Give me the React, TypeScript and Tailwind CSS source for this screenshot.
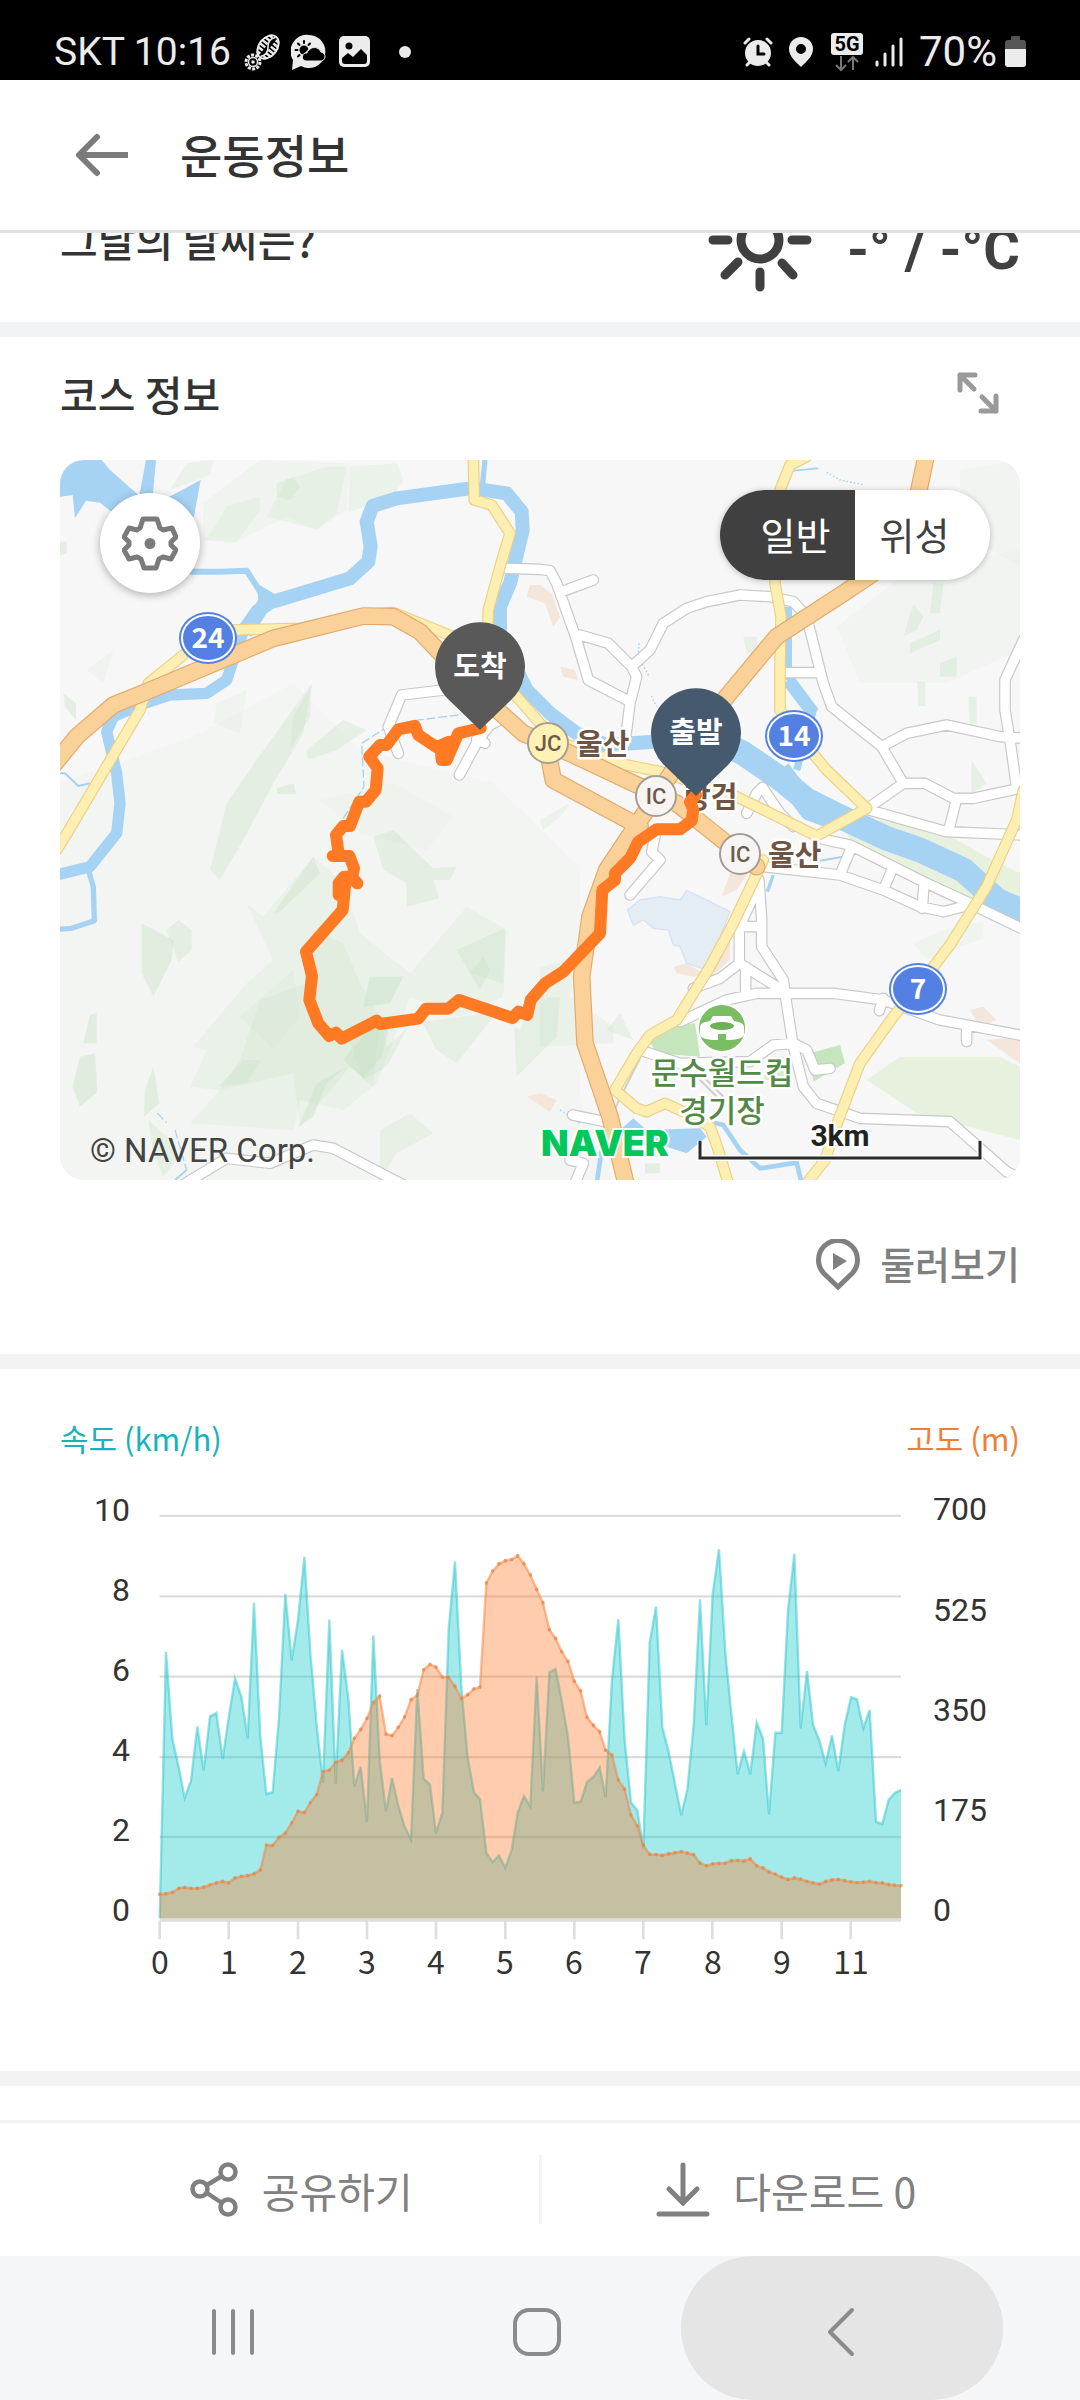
import React from "react";

const SPEED = [
  1354, 658, 885, 960, 1040, 995, 853, 968, 827, 818, 938, 830, 728, 775, 884, 530, 880, 1030, 1025, 830, 507, 680, 575,
  410, 660, 850, 1000, 574, 1003, 653, 780, 1010, 958, 1102, 615, 940, 1075, 988, 1060, 1115, 1148, 755, 990, 1005,
  1132, 1078, 600, 422, 750, 935, 1025, 1043, 1183, 1208, 1190, 1223, 1175, 1078, 1035, 1062, 722, 1023, 712, 703, 785,
  880, 1052, 1050, 998, 985, 960, 1038, 730, 573, 890, 1052, 1072, 1172, 635, 540, 855, 920, 1003, 1085, 1018, 850, 521,
  850, 508, 390, 660, 820, 978, 917, 978, 843, 885, 1083, 870, 870, 550, 402, 858, 708, 848, 890, 950, 877, 970, 850,
  777, 782, 858, 810, 1102, 1108, 1045, 1027, 1019,
];

const ALTITUDE = [
  1291, 1290, 1287, 1276, 1274, 1276, 1276, 1273, 1267, 1262, 1258, 1262, 1249, 1245, 1243, 1238, 1228, 1163, 1164,
  1143, 1132, 1105, 1075, 1078, 1052, 1031, 971, 967, 947, 941, 922, 884, 861, 832, 791, 774, 873, 877, 855, 828, 783,
  771, 705, 691, 698, 724, 725, 748, 780, 770, 755, 750, 478, 447, 428, 420, 417, 407, 428, 457, 495, 530, 600, 623,
  657, 683, 735, 760, 829, 850, 867, 915, 928, 993, 1017, 1084, 1113, 1163, 1187, 1188, 1190, 1186, 1183, 1180, 1184,
  1188, 1210, 1217, 1212, 1211, 1210, 1204, 1203, 1205, 1199, 1217, 1223, 1233, 1239, 1247, 1253, 1249, 1252, 1258,
  1262, 1265, 1258, 1254, 1253, 1256, 1259, 1261, 1260, 1258, 1261, 1262, 1266, 1268, 1269,
];

const STEP = 18.85;
const px = (i: number) => Math.round(299 + i * STEP);
const line = (data: number[]) => data.map((y, i) => `${px(i)},${y}`).join(" ");
const area = (data: number[]) => `299,1354 ${line(data)} ${px(data.length - 1)},1354`;

const LEFT_LABELS: [string, number][] = [
  ["10", 121],
  ["8", 201],
  ["6", 281],
  ["4", 361],
  ["2", 441],
  ["0", 521],
];
const RIGHT_LABELS: [string, number][] = [
  ["700", 120],
  ["525", 221],
  ["350", 321],
  ["175", 421],
  ["0", 521],
];
const X_LABELS = ["0", "1", "2", "3", "4", "5", "6", "7", "8", "9", "11"];

function Chart() {
  return (
    <svg viewBox="0 80 960 500" className="block w-full" role="img" aria-label="속도와 고도 그래프">
      <g transform="scale(0.33333 0.38268)">
        {[303, 513, 723, 933, 1142].map((y) => (
          <path key={y} d={`M299 ${y}H2523`} stroke="#dcdcdc" strokeWidth="6" />
        ))}
        <path d="M299 1359H2523" stroke="#dedede" strokeWidth="9" />
        {X_LABELS.map((l, i) => (
          <path key={l} d={`M${299 + Math.round(i * 207.3)} 1360V1409`} stroke="#dedede" strokeWidth="8" />
        ))}
        <polygon points={area(SPEED)} fill="#29ced0" fillOpacity=".43" />
        <polyline points={line(SPEED)} fill="none" stroke="#29c6ce" strokeOpacity=".5" strokeWidth="7" />
        <polygon points={area(ALTITUDE)} fill="#ff7824" fillOpacity=".37" />
        <polyline points={line(ALTITUDE)} fill="none" stroke="#f5803c" strokeOpacity=".5" strokeWidth="7" />
        {ALTITUDE.map((y, i) => (
          <circle key={i} cx={px(i)} cy={y} r="5" fill="#e88544" fillOpacity=".75" />
        ))}
      </g>
      <g className="text-[32px]" fill="#333" fontFamily="Roboto, sans-serif">
        {LEFT_LABELS.map(([t, y]) => (
          <text key={t} x="70" y={y} textAnchor="end">{t}</text>
        ))}
        {RIGHT_LABELS.map(([t, y]) => (
          <text key={t} x="873" y={y}>{t}</text>
        ))}
      </g>
      <g className="text-[32px]" fill="#333" fontFamily="'Noto Sans CJK KR', sans-serif">
        {X_LABELS.map((t, i) => (
          <text key={t} x={Math.round(99.7 + i * 69.1)} y="574" textAnchor="middle">{t}</text>
        ))}
      </g>
    </svg>
  );
}

const WHITE_ROADS = [
  "M1340 355L1440 358L1470 362L1490 400L1550 570L1585 690L1710 755",
  "M1505 425L1600 390",
  "M1560 555L1645 580L1715 650L1730 680L1710 760L1695 880",
  "M1715 650L1770 600L1810 520L1880 475L1940 455L2040 435L2130 440L2200 455L2240 500L2290 700L2315 770L2465 890L2530 1000L2430 1070",
  "M2170 668H2280",
  "M2465 890L2540 850L2660 825L2820 860L2900 865",
  "M2890 570L2835 690L2835 780L2850 870L2868 1000",
  "M2530 1000L2595 1000L2680 1045L2740 1045L2890 1013",
  "M2690 1045L2668 1135",
  "M2420 1078L2660 1145L2890 1155",
  "M2060 1090L2090 1030L2107 1012L2160 1090L2200 1130",
  "M1150 720L1025 735L985 830L1015 910",
  "M1330 805L1290 825L1255 870L1198 975",
  "M1250 868L1275 880",
  "M2290 1168L2370 1185L2500 1250L2600 1300L2730 1360L2770 1380L2890 1438",
  "M2110 1250L2340 1275L2470 1320L2580 1370L2650 1385L2730 1365",
  "M2375 1190L2340 1275",
  "M2500 1250L2470 1320",
  "M2592 1300L2587 1375",
  "M2097 1290L2105 1410L2105 1490L2170 1590L2175 1630",
  "M2080 1340L2038 1430L2038 1540L1980 1585L1900 1615",
  "M2038 1540L2175 1625",
  "M2057 1550V1630",
  "M2040 1430H2100",
  "M1860 1715L2000 1650L2090 1630L2320 1630L2470 1650L2640 1710L2890 1757",
  "M2470 1645L2458 1682",
  "M2720 1730V1775",
  "M2175 1630L2200 1790L2230 1910L2270 1960L2400 2005L2670 2015L2840 2165L2890 2190",
  "M1740 1800L1860 1840L2070 1835L2140 1785L2200 1780L2240 1800L2265 1860L2310 1855",
  "M1538 1995L1660 2020",
  "M1530 2130L1570 2140L1545 2200",
  "M1785 1160L1775 1205L1800 1230L1710 1335",
  "M360 2210L500 2125L630 2140L760 2085L820 2095L1030 2205",
];

const YELLOW_ROADS = [
  "M1240 20L1243 150L1295 165L1350 250L1320 350L1285 480L1283 560",
  "M520 540L720 535L900 495L1000 488L1180 560L1370 740L1440 820L1510 880L1700 945L1800 965L2030 1040L2270 1158L2420 1075L2300 960L2250 900L2160 780L2160 650L2163 500L2145 400L2145 200L2160 120L2190 45L2240 20",
  "M370 615L265 700L240 780L15 1160L-10 1200",
  "M2110 1230L2020 1420L1950 1550L1850 1710L1770 1755L1730 1810L1665 1920L1730 1975L1760 1985L1815 1960L1880 1990L1950 2030L1975 2100L2008 2210",
  "M2890 1020L2870 1110L2780 1310L2670 1485L2590 1590L2500 1700L2400 1840L2335 2010L2295 2130L2240 2200",
];

const ORANGE_ROADS = [
  "M2600 10L2560 200L2500 330L2350 430L2150 560L2000 740L1880 900L1780 1050L1720 1140L1640 1260L1590 1400L1565 1580L1575 1780L1650 2000L1700 2210",
  "M1470 940L1480 990L1740 1130",
  "M-15 940L50 860L160 765L260 725L640 565L910 498L1000 500L1080 545L1180 650L1290 760L1390 850L1530 910L1720 1000L1850 1060L2000 1180L2090 1250",
];

const RIVERS: [string, number][] = [
  ["M1275 30L1266 120", 16],
  ["M1230 115L1010 145L938 168L920 215L932 290L925 335L870 385L640 455", 42],
  ["M640 455L590 480L555 530L520 630L500 690L440 730L330 735L240 765L160 800L140 845L170 970L180 1060L170 1150L90 1250L-10 1275", 34],
  ["M390 365H480L560 362L610 440", 18],
  ["M85 1260L100 1310L103 1412L35 1435L-10 1438", 16],
  ["M1240 115L1340 130L1385 185L1388 240L1350 400L1320 470L1320 560L1400 720L1470 790L1550 850L1640 885L1780 875L1950 860", 42],
  ["M1950 860L2050 910L2160 985L2240 1050L2340 1100L2480 1165L2580 1200L2710 1260L2810 1350L2900 1390", 74],
  ["M2160 960L2250 1080L2330 1110", 64],
  ["M2185 470V680L2260 780L2210 960", 22],
  ["M2185 690L2260 790", 40],
  ["M2140 1275L2122 1325", 10],
  ["M2280 1232L2350 1220", 6],
  ["M1950 2015L1990 2025L2040 2100L2100 2155L2210 2138L2225 2200", 14],
  ["M1610 2200L1625 2100", 14],
  ["M2200 62L2275 55", 5],
  ["M345 2190L380 2160", 6],
  ["M0 970H15L55 1008L90 1000", 6],
];

const HILLS: [string, number][] = [
  ["M0 1000L400 860L700 700L900 900L1300 1000L1560 1250L1560 1950L1660 2190H0V1500Z", 0.08],
  ["M430 160L600 30L870 40L860 180L770 240L680 200L520 280L430 270Z", 0.15],
  ["M870 50L1010 40L1030 90L990 150L865 185Z", 0.25],
  ["M680 90L800 50L860 50L830 190L770 238L620 200Z", 0.25],
  ["M650 100L700 80L720 110L690 150L650 140Z", 0.3],
  ["M380 40L460 30L450 75L330 120Z", 0.25],
  ["M0 275H20V310L0 318Z", 0.4],
  ["M10 730L48 760V810L15 770Z", 0.4],
  ["M500 170L600 140L600 180L530 275L440 270Z", 0.25],
  ["M590 930L755 700L730 850L640 1000L550 1170L480 1290L450 1260L500 1060Z", 0.35],
  ["M740 900L850 810L920 840L830 900L745 930Z", 0.35],
  ["M700 800L755 705L750 800L690 900Z", 0.3],
  ["M470 760L560 720L540 850L460 820Z", 0.15],
  ["M80 660L160 600L130 700Z", 0.15],
  ["M650 1015L700 1000L708 1032H652Z", 0.4],
  ["M940 1160L1000 1140L1120 1255L1190 1250L1170 1290L1120 1290L1138 1345L1040 1370L1040 1300L970 1260Z", 0.35],
  ["M640 1390L760 1220L780 1270L660 1385Z", 0.35],
  ["M780 1050L1000 1000L1180 1100L1100 1200L900 1150Z", 0.1],
  ["M560 1360L610 1400L760 1220L850 1300L900 1450L1050 1570L1220 1370L1340 1440L1330 1640L1200 1700L1050 1640L950 1900L850 1980L720 1950L700 2040L390 2020L480 1920L390 1910L440 1800L400 1790L560 1600L640 1530Z", 0.22],
  ["M600 1650L740 1600L760 1440L850 1480L900 1600L960 1700L940 1910L870 1850L720 2030L700 1870L480 1920L540 1830Z", 0.2],
  ["M540 1700L700 1560L720 1700L640 1800Z", 0.12],
  ["M870 1780L960 1700L980 1790L1080 1700L1130 1800L1190 1840L1300 1700L1380 1740L1420 1650L1500 1640L1490 1760L1370 1880L1360 1680L1050 1720L980 1850L910 1890Z", 0.3],
  ["M850 1830L950 1710L985 1740L965 1820L910 1885Z", 0.5],
  ["M720 2020L770 1900L860 1850L800 1900L760 2000L710 2035Z", 0.4],
  ["M245 1420L340 1470L335 1530L280 1640L245 1570Z", 0.4],
  ["M320 1440L355 1410L395 1440L395 1500L355 1535Z", 0.35],
  ["M90 1695L110 1690V1780H70Z", 0.4],
  ["M60 1820L105 1810L112 1925L60 1970L38 1910Z", 0.45],
  ["M280 1850L298 1960L252 2000L255 1920Z", 0.4],
  ["M475 1910L550 1830L605 1830L560 1900Z", 0.35],
  ["M1190 1500L1335 1435L1330 1600L1230 1570Z", 0.3],
  ["M1230 1570L1270 1520L1290 1560L1260 1620Z", 0.3],
  ["M930 1580L1030 1580L990 1660L910 1670Z", 0.45],
  ["M960 2040L1050 1990L1120 2050L1010 2110L960 2190Z", 0.25],
  ["M265 2010L320 2060L350 2130L310 2180L280 2110Z", 0.3],
  ["M1440 1550L1540 1530L1530 1640L1660 1730L1660 1780L1440 1790Z", 0.22],
  ["M1680 1690L1720 1770L1640 1740Z", 0.3],
  ["M2330 530L2550 360L2880 300V600L2660 700L2400 700Z", 0.09],
  ["M2560 460L2590 500L2570 540L2530 560Z", 0.35],
  ["M2620 400H2650L2640 490H2610Z", 0.35],
  ["M2550 580L2640 540V570L2550 610Z", 0.35],
  ["M2640 640L2690 620V680L2640 680Z", 0.35],
  ["M2572 695H2596V768H2575Z", 0.35],
  ["M2725 740H2750V820L2730 825Z", 0.35],
  ["M2735 930L2780 1000L2735 1030Z", 0.35],
  ["M2050 560H2090V610H2060Z", 0.3],
  ["M2700 60L2880 30V350L2700 250Z", 0.09],
  ["M2560 1480L2650 1440L2770 1415L2770 1465L2700 1490L2600 1530Z", 0.15],
  ["M1440 1110L1530 1060L1500 1100L1450 1140Z", 0.25],
  ["M1755 2140H1800V2170H1755Z", 0.4],
];

const PEACH = [
  "M1440 405L1475 430L1500 500L1480 530L1455 460L1400 440L1410 405Z",
  "M1500 650L1545 660L1555 690L1510 680Z",
  "M2010 1270L2070 1260L2030 1320L1985 1340Z",
  "M1840 1550L1880 1540L1930 1570L1900 1580L1850 1570Z",
  "M2010 1440V1530L1960 1575L1940 1575Z",
  "M2730 1680L2770 1670L2810 1710L2760 1730Z",
  "M2780 1770L2880 1760V1840Z",
  "M1400 1940L1440 1930L1490 1950L1470 1985Z",
];

const TRACK =
  "M1262 834L1195 850L1160 930H1145L1142 895L1165 876L1130 892L1075 855L1065 828L1015 838L980 885H960L928 920L953 955L947 1020L918 1055H898L870 1128L850 1128L828 1155L837 1218H818L868 1218L882 1255L876 1285L892 1300L876 1282L852 1280L836 1300V1335L855 1310L848 1380L738 1505L756 1578L748 1650L775 1720L808 1758L828 1748L845 1766L950 1712L960 1722L1075 1706L1098 1676H1165L1197 1650L1358 1704L1375 1685L1402 1695L1412 1650L1455 1600L1510 1565L1620 1450L1627 1320L1665 1290V1270L1710 1225L1735 1175L1790 1138H1860L1895 1112L1900 1080L1890 1055L1908 1035";

function Roads({ paths, edge, fill, width }: { paths: string[]; edge: string; fill: string; width: number }) {
  return (
    <g fill="none" strokeLinecap="round" strokeLinejoin="round">
      <path d={paths.join("")} stroke={edge} strokeWidth={width + 7} />
      <path d={paths.join("")} stroke={fill} strokeWidth={width} />
    </g>
  );
}

function RouteBadge({ x, y, label }: { x: number; y: number; label: string }) {
  return (
    <g>
      <ellipse cx={x} cy={y} rx="29" ry="26" fill="#5380e2" />
      <ellipse cx={x} cy={y} rx="26" ry="23" fill="none" stroke="#fff" strokeWidth="2" />
      <text x={x} y={y + 10} textAnchor="middle" className="text-[28px] font-bold" fill="#fff">{label}</text>
    </g>
  );
}

function Junction({ x, y, label, fill }: { x: number; y: number; label: string; fill: string }) {
  return (
    <g>
      <circle cx={x} cy={y} r="20" fill={fill} stroke="#a89d93" strokeWidth="2" />
      <text x={x} y={y + 8} textAnchor="middle" className="text-[22px] font-medium" fill="#6e5a4c" fontFamily="Roboto, sans-serif">{label}</text>
    </g>
  );
}

function CourseMap() {
  return (
    <svg viewBox="0 0 960 720" className="block w-full" role="img" aria-label="코스 지도" fontFamily="'Noto Sans CJK KR', sans-serif">
      <rect width="960" height="720" fill="#f7f7f7" />
      <g transform="translate(0 -10) scale(0.33333)">
        {HILLS.map(([d, o], i) => (
          <path key={i} d={d} fill="#c8e2c5" fillOpacity={o} />
        ))}
        {PEACH.map((d) => (
          <path key={d} d={d} fill="#f4e6db" />
        ))}
        <path d="M2420 1890L2520 1820H2820L2880 1850V2070L2570 1990Z" fill="#e8f1de" />
        <path d="M2360 1150L2420 1105L2640 1140L2760 1210L2880 1270V1400L2800 1400L2640 1340L2500 1230L2380 1190Z" fill="#e8f1de" />
        <path d="M1770 1775L1810 1730L1905 1720L1920 1820L1790 1810Z" fill="#c5e6bc" />
        <path d="M2250 1810L2340 1785L2355 1840L2260 1895Z" fill="#c5e6bc" />
        <path d="M2130 1820H2190V1890H2110Z" fill="#d5edce" />
        <path d="M1702 1380L1740 1350L1800 1340L1860 1350L1880 1322L1920 1340L2010 1385L1940 1560L1880 1540L1860 1490L1840 1485L1825 1440L1780 1435L1750 1410L1720 1425Z" fill="#e4ecf4" stroke="#d7e3ef" strokeWidth="4" />
        <g fill="#a6d3f3">
          <path d="M0 30H125L150 60L232 132L270 250L160 190L120 158L78 152L45 205L38 135L0 140Z" />
          <path d="M258 30H288L278 140H237Z" />
          <path d="M320 145L422 90L402 200L340 200Z" />
          <path d="M1680 2040L1720 2005L1760 2040L1920 2035L1940 2060L1880 2110L1820 2090L1680 2075Z" />
          <path d="M590 400L640 430L680 450L620 490L575 560L530 540L595 450Z" />
        </g>
        <g fill="none" stroke="#a6d3f3" strokeLinejoin="round">
          {RIVERS.map(([d, w]) => (
            <path key={d} d={d} strokeWidth={w} />
          ))}
          <g strokeWidth="4" strokeDasharray="26 9">
            <path d="M1195 795L1060 812L975 835L905 880L912 1010L820 1150" />
            <path d="M345 2040L380 2160" />
            <path d="M292 1990L320 2018" />
          </g>
          <g strokeWidth="4" strokeDasharray="5 6">
            <path d="M2300 67L2340 90L2410 104" />
            <path d="M1737 580L1735 620L1768 680" />
            <path d="M1774 738L1790 770" />
            <path d="M1500 1980L1560 2020" />
          </g>
        </g>
        <g fill="none" stroke="#cfcfcf" strokeWidth="6">
          <path d="M1665 1975L1740 1825" />
          <path d="M1915 1885L1980 1950M1935 1885L2000 1950" />
        </g>
        <Roads paths={WHITE_ROADS} edge="#c8c8c8" fill="#fff" width={28} />
        <Roads paths={YELLOW_ROADS} edge="#ecd086" fill="#fdefb2" width={28} />
        <Roads paths={ORANGE_ROADS} edge="#e3aa6b" fill="#f9d199" width={46} />
      </g>

      <g fill="#6e5444" stroke="#fff" strokeWidth="5" strokeLinejoin="round" paintOrder="stroke" className="text-[29px] font-bold">
        <text x="516" y="295">울산</text>
        <text x="624" y="348">랑검</text>
        <text x="708" y="406">울산</text>
      </g>
      <Junction x={488} y={283} label="JC" fill="#fff2b5" />
      <Junction x={596} y={336} label="IC" fill="#f6f5f3" />
      <Junction x={680} y={394} label="IC" fill="#f6f5f3" />
      <RouteBadge x={148} y={178} label="24" />
      <RouteBadge x={734} y={276} label="14" />
      <RouteBadge x={858} y={529} label="7" />

      <g>
        <circle cx="662" cy="568" r="24" fill="#7bbd62" stroke="#fff" strokeWidth="2" />
        <path d="M653 556h18l3 5c7 1 10 3 10 6v8c0 3-8 5-18 5v-6h-8v6c-10 0-18-2-18-5v-8c0-3 3-5 10-6Z" fill="#fff" />
        <ellipse cx="662" cy="566" rx="12" ry="4" fill="#6fb056" />
      </g>
      <text fill="#528a45" stroke="#fff" strokeWidth="5" strokeLinejoin="round" paintOrder="stroke" textAnchor="middle" className="text-[31px] font-medium">
        <tspan x="662" y="624">문수월드컵</tspan>
        <tspan x="662" y="662">경기장</tspan>
      </text>

      <text x="30" y="702" className="text-[33px]" fill="#444" fontFamily="Roboto, sans-serif">© NAVER Corp.</text>
      <text x="481" y="696" className="text-[36px] font-black" fill="#03c75a" stroke="#fff" strokeWidth="4" paintOrder="stroke" fontFamily="Inter, sans-serif">NAVER</text>
      <path d="M640 681V698H920V681" fill="none" stroke="#fff" strokeWidth="6" />
      <path d="M640 681V698H920V681" fill="none" stroke="#2b2b2b" strokeWidth="3" />
      <text x="780" y="686" textAnchor="middle" className="text-[30px] font-bold" fill="#222" stroke="#fff" strokeWidth="4" paintOrder="stroke" fontFamily="Roboto, sans-serif">3km</text>

      <path d={TRACK} transform="translate(0 -10) scale(0.33333)" fill="none" stroke="#ff7a22" strokeWidth="36" strokeLinecap="round" strokeLinejoin="round" />

      <g textAnchor="middle" className="text-[29px] font-bold">
        <path d="M420 270L388 239A45 45 0 1 1 452 239Z" fill="#595959" />
        <text x="420" y="217" fill="#fff">도착</text>
        <path d="M636 336L604 305A45 45 0 1 1 668 305Z" fill="#455a6e" />
        <text x="636" y="283" fill="#fff">출발</text>
      </g>
    </svg>
  );
}

function StatusBar() {
  return (
    <div className="flex h-20 items-center justify-between bg-black pt-6 pr-[54px] pl-[54px] text-[#ececec]">
      <div className="flex items-center">
        <span className="font-[Roboto] text-[39px] leading-10">SKT 10:16</span>
        <svg className="ml-3 h-10 w-10" viewBox="0 0 40 40" fill="none" stroke="currentColor">
          <g transform="rotate(38 25 15)">
            <ellipse cx="25" cy="15" rx="9" ry="13" strokeWidth="2" />
            <path d="M19 5h4M27 5h4M17 9h6M27 9h6M16 13h7M27 13h7M16 17h7M27 17h7M17 21h6M27 21h6M19 25h4M27 25h4" strokeWidth="2.4" />
            <path d="M25 3q-5 6 0 12t0 12" strokeWidth="1.6" />
          </g>
          <circle cx="10" cy="30" r="7" strokeWidth="3" strokeDasharray="3 1.4" />
          <circle cx="10" cy="30" r="4.5" strokeWidth="1.5" />
          <circle cx="10" cy="30" r="1.8" fill="currentColor" stroke="none" />
        </svg>
        <svg className="ml-2 h-9 w-9" viewBox="0 0 36 36">
          <path d="M18 1a16.500 16.500 0 1 1-8 31L1 36l1-10A16.500 16.500 0 0 1 18 1Z" fill="currentColor" />
          <g stroke="#000" strokeWidth="2" strokeLinecap="round">
            <circle cx="13" cy="16" r="4.500" fill="#000" stroke="none" />
            <path d="M13 7v2M7 9.500l1.500 1.500M4.500 16h2M7 22.500l1.500-1.500M19 9.500l-1.500 1.500" />
          </g>
          <path d="M9 26L23 11" stroke="#ececec" strokeWidth="2.500" />
          <path d="M15 27h14a4.500 4.500 0 0 0 1-9 7 7 0 0 0-12-2q-2 1-2 3a4 4 0 0 0-1 8Z" fill="#000" stroke="#ececec" strokeWidth="1" />
        </svg>
        <svg className="ml-3 h-8 w-8" viewBox="0 0 32 32">
          <rect x="0" y="0" width="31" height="31" rx="5" fill="currentColor" />
          <circle cx="10" cy="10" r="3.500" fill="#000" />
          <path d="M3 22l6-5 5 4 8-8 6 6v6a3 3 0 0 1-3 3H6a3 3 0 0 1-3-3Z" fill="#000" />
        </svg>
        <span className="ml-7 h-3 w-3 rounded-full bg-[#ececec]" />
      </div>
      <div className="flex items-center">
        <svg className="h-[30px] w-[30px]" viewBox="0 0 30 30" fill="none" stroke="currentColor" strokeLinecap="round">
          <circle cx="15" cy="16" r="13" fill="currentColor" stroke="none" />
          <path d="M2 6l4-4M28 6l-4-4M4 28l3-3M26 28l-3-3" strokeWidth="3" />
          <path d="M15 9v8h6" stroke="#000" strokeWidth="3" />
        </svg>
        <svg className="ml-4 h-[30px] w-6" viewBox="0 0 24 30">
          <path fillRule="evenodd" d="M12 0a12 12 0 0 1 12 12c0 7-6 12-12 18C6 24 0 19 0 12A12 12 0 0 1 12 0Zm0 7a5 5 0 1 0 0 10 5 5 0 0 0 0-10Z" fill="currentColor" />
        </svg>
        <svg className="ml-[18px] h-10 w-8" viewBox="0 0 32 40">
          <rect y="1" width="32" height="22" rx="3" fill="currentColor" />
          <text x="16" y="19" textAnchor="middle" className="text-[20px] font-bold" fill="#000" fontFamily="Roboto, sans-serif">5G</text>
          <path d="M10 24v13M5 33l5 5 5-5M22 38V25M17 30l5-5 5 5" fill="none" stroke="#777" strokeWidth="2" />
        </svg>
        <svg className="ml-3 h-[30px] w-7" viewBox="0 0 28 30" stroke="currentColor" strokeWidth="3" strokeLinecap="round">
          <path d="M2 25v3M10 17v11M18 9v19M26 2v26" />
        </svg>
        <span className="ml-4 font-[Roboto] text-[42px] leading-10">70%</span>
        <svg className="ml-2 h-8 w-[21px]" viewBox="0 0 21 32">
          <path d="M6 1q0-1 1-1h7q1 0 1 1v3h3q3 0 3 3v7H0V7q0-3 3-3h3Z" fill="#555" />
          <path d="M0 13h21v15q0 3-3 3H3q-3 0-3-3Z" fill="currentColor" />
        </svg>
      </div>
    </div>
  );
}

export default function App() {
  return (
    <div className="flex min-h-screen flex-col bg-white font-['Noto_Sans_CJK_KR',sans-serif] text-[#333]">
      <StatusBar />

      <header className="flex h-[153px] items-center border-b-[3px] border-[#e2e2e2] pl-[74px]">
        <button type="button" aria-label="뒤로" className="text-[#7b7b7b]">
          <svg className="h-11 w-14" viewBox="0 0 56 44" fill="none" stroke="currentColor" strokeWidth="6">
            <path d="M23 4L5 22l18 18" strokeLinecap="round" strokeLinejoin="round" />
            <path d="M5 22h49" />
          </svg>
        </button>
        <h1 className="ml-[50px] pb-1 text-[46px] leading-[60px] font-medium">운동정보</h1>
      </header>

      <main>
        <section className="flex h-[89px] items-start justify-between overflow-hidden px-[60px]">
          <h2 className="-mt-6 text-[41px] leading-[60px] font-medium">그날의 날씨는?</h2>
          <div className="-mt-12 flex items-center text-[#404040]">
            <svg className="h-[110px] w-[110px]" viewBox="0 0 110 110" fill="none" stroke="currentColor" strokeWidth="9" strokeLinecap="round">
              <circle cx="55" cy="55" r="19" />
              <path d="M8 55h15M87 55h15M55 87v15M55 8v15M33 77L20 90M77 78l11 12M33 33L20 20M77 33l13-13" />
            </svg>
            <span className="mt-5 ml-8 font-[Roboto] text-[56px] leading-[60px] font-bold whitespace-pre">-° / -°C</span>
          </div>
        </section>

        <section className="border-t-[15px] border-[#f1f3f5] px-[60px]">
          <div className="mb-[11px] flex h-28 items-center justify-between pr-5">
            <h2 className="text-[41px] leading-[60px] font-medium">코스 정보</h2>
            <button type="button" aria-label="지도 확대" className="text-[#9a9a9a]">
              <svg className="h-11 w-11" viewBox="0 0 44 44" fill="none" stroke="currentColor" strokeWidth="5" strokeLinecap="round" strokeLinejoin="round">
                <path d="M4 19V4h15M4 4l14 14M26 26l14 14M40 25v15H25" />
              </svg>
            </button>
          </div>
          <div className="relative overflow-hidden rounded-3xl">
            <CourseMap />
            <button type="button" aria-label="지도 설정" className="absolute top-[33px] left-10 flex h-[100px] w-[100px] items-center justify-center rounded-full bg-white text-[#7b7b7b] shadow-[0_2px_8px_rgba(0,0,0,0.3)]">
              <svg className="h-14 w-14" viewBox="0 0 56 56" fill="none" stroke="currentColor" strokeWidth="5" strokeLinejoin="round">
                <path d="M21 4h14l3 9 3 2 9-2 4 9-5 5v3l5 5-5 9-8-2-4 2-3 9H22l-3-9-4-2-8 2-5-9 5-5v-3l-5-5 5-9 8 2 3-2Z" />
                <circle cx="28" cy="28.500" r="5.500" fill="currentColor" stroke="none" />
              </svg>
            </button>
            <div className="absolute top-[30px] right-[30px] flex h-[90px] overflow-hidden rounded-full bg-white text-[38px] leading-[56px] shadow-[0_1px_6px_rgba(0,0,0,0.25)]">
              <button type="button" aria-pressed="true" className="w-[135px] bg-[#404040] pb-0.5 pl-4 text-white">일반</button>
              <button type="button" aria-pressed="false" className="w-[135px] bg-white pr-4 pb-0.5 text-[#404040]">위성</button>
            </div>
          </div>
          <div className="flex h-[174px] items-center justify-end pb-1">
            <button type="button" className="flex items-center text-[38px] leading-[56px] font-medium text-[#808080]">
              <svg className="mr-5 h-[52px] w-11" viewBox="0 0 44 52">
                <path d="M22 48L8 34.500A19.500 19.500 0 1 1 36 34.500Z" fill="none" stroke="currentColor" strokeWidth="5" />
                <path d="M17 14l14 8-14 9Z" fill="currentColor" />
              </svg>
              <span className="pb-1">둘러보기</span>
            </button>
          </div>
        </section>

        <section className="border-y-[15px] border-[#f1f3f5] px-[60px] pb-[91px]">
          <div className="flex h-[111px] items-start justify-between pt-[46px] text-[31px] leading-[46px]">
            <span className="text-[#17b3bd]">속도 (km/h)</span>
            <span className="text-[#f07f35]">고도 (m)</span>
          </div>
          <Chart />
        </section>
      </main>

      <footer className="mt-auto">
        <div className="grid h-[136px] grid-cols-[1fr_3px_1fr] items-center border-t-[3px] border-[#f1f3f5] text-[41px] leading-[60px] text-[#808080]">
          <button type="button" className="flex h-full items-center justify-center pl-16">
            <svg className="mr-6 h-14 w-12" viewBox="0 0 48 56" fill="none" stroke="currentColor" strokeWidth="4.500">
              <circle cx="38" cy="10" r="7.500" />
              <circle cx="10" cy="27" r="7.500" />
              <circle cx="38" cy="45" r="7.500" />
              <path d="M17 23l15-9M17 31l15 10" />
            </svg>
            공유하기
          </button>
          <span className="h-[69px] bg-[#f1f3f5]" />
          <button type="button" className="flex h-full items-center justify-center pr-[50px]">
            <svg className="mr-[22px] h-14 w-14" viewBox="0 0 56 56" fill="none" stroke="currentColor" strokeWidth="5" strokeLinecap="round">
              <path d="M28 3v38M14 27l14 14 14-14M4 52h48" />
            </svg>
            다운로드 0
          </button>
        </div>
        <nav className="flex h-36 items-stretch justify-between bg-[#f5f6f8] pr-[77px] pl-[73px] text-[#8b8b8b]">
          <button type="button" aria-label="최근 앱" className="flex w-80 items-center justify-center pt-2">
            <svg className="h-12 w-12" viewBox="0 0 48 48" stroke="currentColor" strokeWidth="4" strokeLinecap="round">
              <path d="M5 3v42M24 3v42M43 3v42" />
            </svg>
          </button>
          <button type="button" aria-label="홈" className="flex w-40 items-center justify-center pt-2">
            <svg className="h-12 w-12" viewBox="0 0 48 48" fill="none" stroke="currentColor" strokeWidth="4">
              <rect x="2" y="2" width="44" height="44" rx="14" />
            </svg>
          </button>
          <button type="button" aria-label="이전" className="flex w-[322px] items-center justify-center rounded-full bg-[#e5e5e5] pt-2">
            <svg className="h-[52px] w-8" viewBox="0 0 32 52" fill="none" stroke="currentColor" strokeWidth="4" strokeLinecap="round" strokeLinejoin="round">
              <path d="M26 4L4 26l22 22" />
            </svg>
          </button>
        </nav>
      </footer>
    </div>
  );
}
